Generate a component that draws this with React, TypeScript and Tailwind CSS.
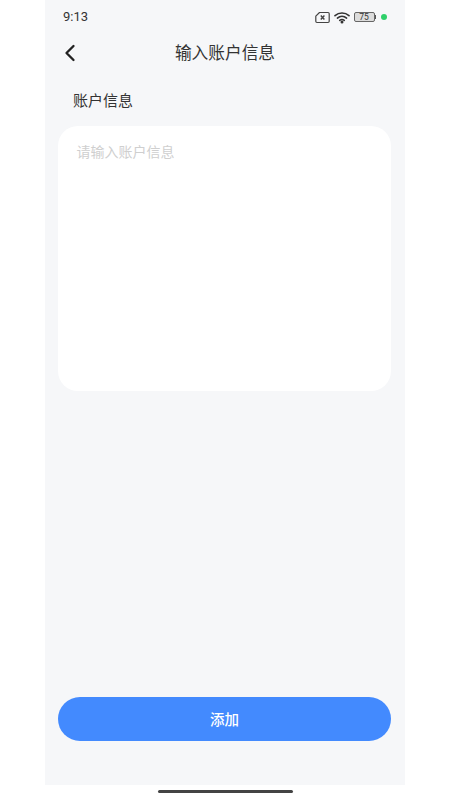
import React from 'react';
import { ChevronLeft } from 'lucide-react';

const font = "font-['Noto_Sans_CJK_SC','Noto_Sans',sans-serif]";

const StatusIcons: React.FC = () => (
  <div className="flex items-center">
    <svg width="15" height="13" viewBox="0 0 15 12" fill="none" stroke="#444" strokeWidth="1.2">
      <path d="M4.5 1H13a1.2 1.2 0 0 1 1.2 1.2v7.6A1.2 1.2 0 0 1 13 11H2a1.2 1.2 0 0 1-1.2-1.2V4.6z" strokeLinejoin="round" />
      <path d="M5.8 4l3.6 4M9.4 4L5.8 8" strokeWidth="1.4" />
    </svg>
    <svg className="ml-[4px]" width="16" height="13" viewBox="0 0 16 12" fill="none" stroke="#333" strokeWidth="1.6" strokeLinecap="round">
      <path d="M1 4.2C5 .6 11 .6 15 4.2" />
      <path d="M3.4 6.6c2.7-2.3 6.5-2.3 9.2 0" />
      <path d="M5.7 8.8c1.4-1 3.2-1 4.6 0" />
      <circle cx="8" cy="10.6" r=".7" fill="#333" />
    </svg>
    <div className="ml-[4px] flex items-center">
      <div className="flex h-[10px] w-[21px] items-center justify-center rounded-[2px] border border-[#666] bg-[#dcdcdc] font-['Roboto',sans-serif] text-[8.5px] leading-none text-[#333]">
        75
      </div>
      <div className="h-[4px] w-[1.5px] bg-[#555]" />
    </div>
    <div className="ml-[5px] h-[6px] w-[6px] rounded-full bg-[#2fd06a]" />
  </div>
);

export default function App() {
  return (
    <div className={`flex h-[800px] w-[450px] flex-col items-center bg-white ${font}`}>
      <div className="flex h-[785px] w-[360px] flex-col bg-[#f6f7f9]">
        <div className="flex h-[34px] items-center justify-between pl-[18px] pr-[18px]">
          <span className="font-['Roboto',sans-serif] text-[13px] text-[#333]">9:13</span>
          <StatusIcons />
        </div>

        <div className="relative flex h-[38px] items-center justify-center">
          <ChevronLeft className="absolute left-[11px] text-[#222]" size={28} strokeWidth={2} />
          <span className="text-[16.7px] text-[#333]">输入账户信息</span>
        </div>

        <div className="mt-[5px] pl-[28px] text-[15px] leading-[46px] text-[#333]">账户信息</div>

        <div className="ml-[13px] mr-[14px] mt-[3px] h-[265px] rounded-[20px] bg-white py-[13px] pl-[18.5px]">
          <p className="text-[14px] leading-[24px] text-[#cfcfcf]">请输入账户信息</p>
        </div>

        <button className="ml-[13px] mr-[14px] mt-auto mb-[44px] h-[44px] rounded-full bg-[#438afe] text-[14.5px] font-medium text-white">
          添加
        </button>
      </div>
      <div className="mt-[5px] h-[3px] w-[135px] rounded-full bg-[#444]" />
    </div>
  );
}
